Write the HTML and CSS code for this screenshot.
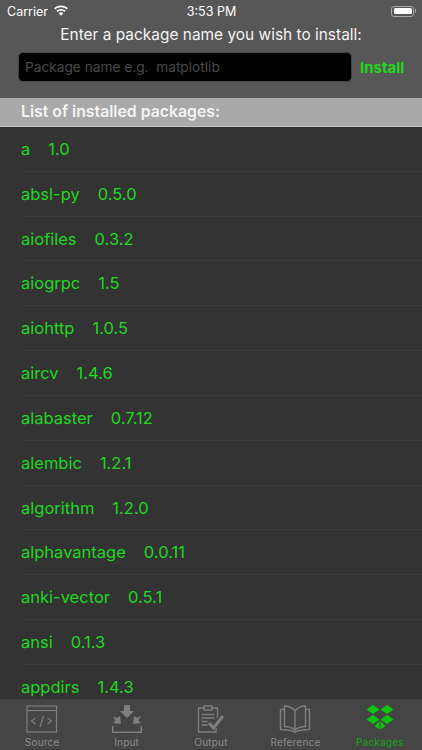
FILE: index.html
```html
<!DOCTYPE html>
<html lang="en">
    <head>
        <meta charset="UTF-8" />
        <title>Packages</title>
        <link rel="stylesheet" href="styles.css">
    </head>
    <body>
        <div class="top-panel">
            <div class="status-bar">
                <div class="status-left">
                    <span>Carrier</span>
                    <svg class="wifi-icon" viewBox="0 0 16 12" width="16" height="12">
                        <path d="M8 2.300c2.200 0 4.200.8 5.700 2.200l1.200-1.300C13.100 1.500 10.700.5 8 .5S2.900 1.500 1.100 3.200l1.200 1.300C3.800 3.100 5.800 2.300 8 2.300z" fill="#fff"/>
                        <path d="M8 5.700c1.300 0 2.500.5 3.400 1.300l1.200-1.300C11.400 4.600 9.800 3.900 8 3.900s-3.400.7-4.600 1.800l1.200 1.300c.9-.8 2.100-1.300 3.400-1.300z" fill="#fff"/>
                        <path d="M8 7.300c-1 0-1.700.4-2.300.9L8 10.800l2.300-2.600C9.700 7.700 9 7.300 8 7.300z" fill="#fff"/>
                    </svg>
                </div>
                <div class="status-time">3:53 PM</div>
                <div class="status-right">
                    <div class="battery"><div class="battery-fill"></div></div>
                    <div class="battery-cap"></div>
                </div>
            </div>
            <div class="install-title">Enter a package name you wish to install:</div>
            <div class="install-row">
                <div class="install-input">Package name e.g.&nbsp; matplotlib</div>
                <div class="install-button">Install</div>
            </div>
        </div>
        <div class="list-head">List of installed packages:</div>
        <ul class="package-list">
            <li class="package-item"><span class="package-name">a</span><span>1.0</span></li>
            <li class="package-item"><span class="package-name">absl-py</span><span>0.5.0</span></li>
            <li class="package-item"><span class="package-name">aiofiles</span><span>0.3.2</span></li>
            <li class="package-item"><span class="package-name">aiogrpc</span><span>1.5</span></li>
            <li class="package-item"><span class="package-name">aiohttp</span><span>1.0.5</span></li>
            <li class="package-item"><span class="package-name">aircv</span><span>1.4.6</span></li>
            <li class="package-item"><span class="package-name">alabaster</span><span>0.7.12</span></li>
            <li class="package-item"><span class="package-name">alembic</span><span>1.2.1</span></li>
            <li class="package-item"><span class="package-name">algorithm</span><span>1.2.0</span></li>
            <li class="package-item"><span class="package-name">alphavantage</span><span>0.0.11</span></li>
            <li class="package-item"><span class="package-name">anki-vector</span><span>0.5.1</span></li>
            <li class="package-item"><span class="package-name">ansi</span><span>0.1.3</span></li>
            <li class="package-item"><span class="package-name">appdirs</span><span>1.4.3</span></li>
        </ul>
        <div class="tab-bar">
            <div class="tab-item">
                <svg class="tab-icon" viewBox="0 0 32 28" width="32" height="28" fill="none" stroke="#7f7f7f" stroke-width="1.2">
                    <rect x="1" y="1" width="29.500" height="26"/>
                    <path d="M1 5.500h29.500"/>
                    <path d="M9.500 13l-4 3 4 3M21.500 13l4 3-4 3M17.500 11l-3.500 11"/>
                </svg>
                <span>Source</span>
            </div>
            <div class="tab-item">
                <svg class="tab-icon" viewBox="0 0 32 28" width="32" height="28" fill="#7f7f7f">
                    <path d="M13 0h6v6h4l-7 7-7-7h4z"/>
                    <path d="M2 11l4 2 3-2 1 8-8-1 2.500-2.500zM30 11l-4 2-3-2-1 8 8-1-2.500-2.500z"/>
                    <path d="M1 21v7h30v-7h-1.500v5.500h-27V21z"/>
                </svg>
                <span>Input</span>
            </div>
            <div class="tab-item">
                <svg class="tab-icon" viewBox="0 0 32 28" width="32" height="28" fill="none" stroke="#7f7f7f" stroke-width="1.4">
                    <path d="M9 3H3.500v24H21v-4M17 3h5.500v10"/>
                    <rect x="9" y="1" width="8" height="4"/>
                    <path d="M6.500 9.500h13M6.500 13h13M6.500 16.500h6M6.500 20h6"/>
                    <path d="M14 18l4.500 5 9.500-12" stroke-width="3"/>
                </svg>
                <span>Output</span>
            </div>
            <div class="tab-item">
                <svg class="tab-icon" viewBox="0 0 32 28" width="32" height="28" fill="none" stroke="#7f7f7f" stroke-width="1.4">
                    <path d="M16 5.500C13 2.500 9 1 5.500 1v20.500c4 0 7.500 1 10.500 3.500 3-2.500 6.500-3.500 10.500-3.500V1C23 1 19 2.500 16 5.500zM16 5.500V25"/>
                    <path d="M5.500 4.500H1.500v20c5 0 10 .5 14.500 2.500 4.500-2 9.500-2.500 14.500-2.500v-20h-4"/>
                </svg>
                <span>Reference</span>
            </div>
            <div class="tab-item tab-active">
                <svg class="tab-icon" viewBox="0 0 30 28" width="30" height="28" fill="#0dc40d">
                    <path d="M8 0l6.500 4.500L8 9 1.500 4.500zM22 0l6.500 4.500L22 9l-6.500-4.500z"/>
                    <path d="M8 10l6.500 4.500L8 19l-6.500-4.500zM22 10l6.500 4.500L22 19l-6.500-4.500z"/>
                    <path d="M14.500 16v8.500L9.500 21zM15.500 16v8.500l5-3.500z"/>
                </svg>
                <span>Packages</span>
            </div>
        </div>
    </body>
</html>
```
FILE: styles.css
```css
html,
body,
ul,
li {
    padding: 0;
    margin: 0;
}
ul,
li {
    list-style: none;
}
html,
body {
    height: 100%;
}

body {
    display: flex;
    flex-flow: column;
    width: 422px;
    height: 750px;
    overflow: hidden;
    background-color: #333333;
    font-family: Inter, "Liberation Sans", sans-serif;
}

.top-panel {
    height: 98px;
    flex: none;
    background-color: #575757;
    color: #fff;
}
.status-bar {
    display: flex;
    justify-content: space-between;
    align-items: center;
    height: 22px;
    padding: 0 6px 0 7px;
    font-size: 12.500px;
}
.status-left {
    display: flex;
    align-items: center;
    gap: 5px;
    width: 120px;
}
.status-right {
    display: flex;
    align-items: center;
    justify-content: flex-end;
    width: 120px;
}
.battery {
    width: 23px;
    height: 11px;
    box-sizing: border-box;
    padding: 1.500px;
    border: 1px solid #a8a8a8;
    border-radius: 3px;
}
.battery-fill {
    height: 100%;
    background-color: #fff;
    border-radius: 1.500px;
}
.battery-cap {
    width: 1px;
    height: 4px;
    margin-left: 1px;
    background-color: #a8a8a8;
}
.install-title {
    margin-top: 1px;
    text-align: center;
    font-size: 15.450px;
    line-height: 24px;
    color: #f4f4f4;
}
.install-row {
    display: flex;
    align-items: center;
    margin-top: 5px;
    padding-left: 18px;
}
.install-input {
    width: 334px;
    height: 30px;
    box-sizing: border-box;
    padding-left: 6px;
    line-height: 28px;
    font-size: 13.700px;
    color: #4a4a4a;
    background-color: #000;
    border: 1px solid #444;
    border-radius: 5px;
}
.install-button {
    margin-left: 8px;
    font-size: 15px;
    font-weight: bold;
    color: #1fd81f;
}

.list-head {
    height: 29px;
    flex: none;
    box-sizing: border-box;
    padding-left: 21px;
    line-height: 28px;
    font-size: 15.800px;
    font-weight: 600;
    color: #f4f4f4;
    background-color: #a9a9a9;
    border-bottom: 1px solid #c4c4c4;
}

.package-list {
    flex: 1;
    overflow: hidden;
}
.package-item {
    display: flex;
    align-items: center;
    gap: 18px;
    height: 44.830px;
    margin-left: 21px;
    font-size: 16.500px;
    color: #1fd81f;
    border-bottom: 1px solid #3b3b3b;
    box-sizing: border-box;
}

.tab-bar {
    display: flex;
    height: 51px;
    flex: none;
    background-color: #454545;
}
.tab-item {
    flex: 1;
    display: flex;
    flex-flow: column;
    align-items: center;
    justify-content: flex-end;
    padding-bottom: 2px;
    font-size: 10px;
    letter-spacing: 0.2px;
    color: #8a8a8a;
}
.tab-icon {
    margin-bottom: 3px;
}
.tab-active {
    color: #13a813;
}
```
